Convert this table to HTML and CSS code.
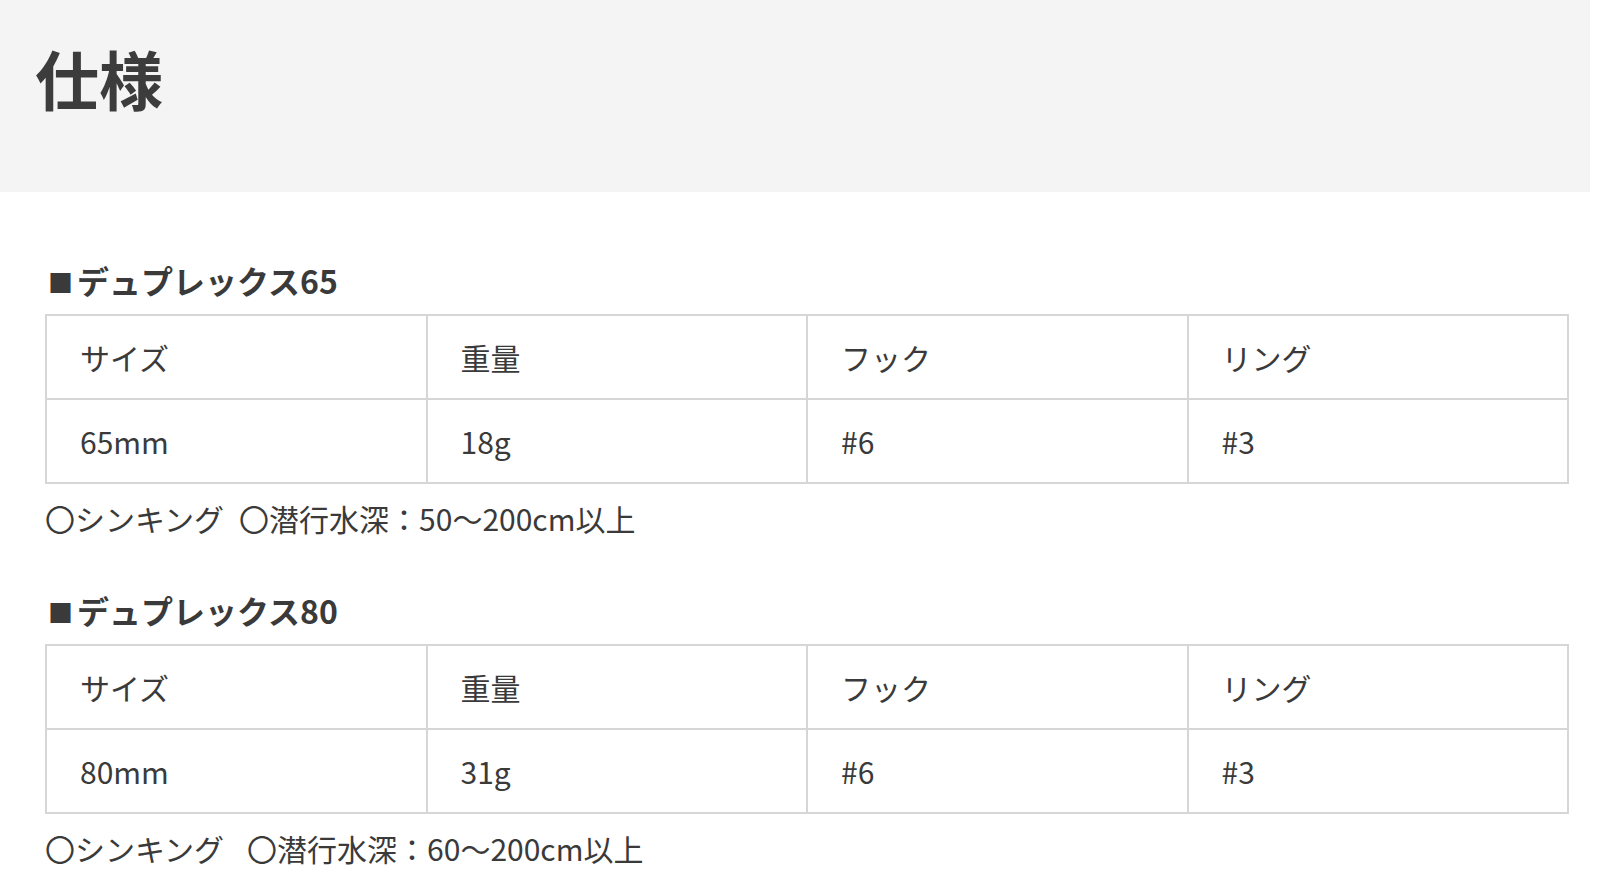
FILE: index.html
```html
<!DOCTYPE html>
<html lang="ja">
<head>
<meta charset="utf-8">
<title>仕様</title>
<link rel="stylesheet" href="styles.css">
</head>
<body>
<header class="page-header">
  <h1 class="page-title">仕様</h1>
</header>
<main class="specs">
  <section class="spec">
    <h2 class="spec-title"><span class="mark">■</span>デュプレックス65</h2>
    <table class="spec-table">
      <tr><td>サイズ</td><td>重量</td><td>フック</td><td>リング</td></tr>
      <tr><td>65mm</td><td>18g</td><td>#6</td><td>#3</td></tr>
    </table>
    <p class="spec-note"><span class="note-item">〇シンキング</span><span class="note-item">〇潜行水深：50〜200cm以上</span></p>
  </section>
  <section class="spec">
    <h2 class="spec-title"><span class="mark">■</span>デュプレックス80</h2>
    <table class="spec-table">
      <tr><td>サイズ</td><td>重量</td><td>フック</td><td>リング</td></tr>
      <tr><td>80mm</td><td>31g</td><td>#6</td><td>#3</td></tr>
    </table>
    <p class="spec-note spec-note--wide"><span class="note-item">〇シンキング</span><span class="note-item">〇潜行水深：60〜200cm以上</span></p>
  </section>
</main>
</body>
</html>
```

FILE: styles.css
```css
html, body {
  margin: 0;
  padding: 0;
  background: #ffffff;
}
body {
  font-family: "Noto Sans CJK JP", "Noto Sans", sans-serif;
  color: #3a3a3a;
  width: 1600px;
}
.page-header {
  width: 1590px;
  height: 192px;
  background: #f4f4f4;
  box-sizing: border-box;
  padding: 45px 0 0 35px;
}
.page-title {
  margin: 0;
  font-size: 64px;
  line-height: 64px;
  font-weight: 700;
  color: #3c3c3c;
}
.specs {
  padding: 66px 31px 0 45px;
  display: flex;
  flex-direction: column;
  gap: 48px;
}
.spec {
  display: flex;
  flex-direction: column;
}
.spec-title {
  margin: 0 0 10px 3px;
  font-size: 32px;
  line-height: 44px;
  font-weight: 700;
  color: #3a3a3a;
}
.spec-title .mark {
  font-size: 25px;
  display: inline-block;
  margin-right: 4px;
  vertical-align: 1px;
}
.spec-table {
  width: 100%;
  border-collapse: collapse;
  table-layout: fixed;
}
.spec-table td {
  border: 2px solid #d6d6d6;
  height: 84px;
  padding: 0 0 0 33px;
  box-sizing: border-box;
  font-size: 30px;
  line-height: 40px;
  color: #3a3a3a;
  vertical-align: middle;
}
.spec-note {
  margin: 12px 0 0 0;
  font-size: 30px;
  line-height: 44px;
  color: #3a3a3a;
}
.note-item + .note-item {
  margin-left: 15px;
}
.spec-note--wide .note-item + .note-item {
  margin-left: 23px;
}
```
